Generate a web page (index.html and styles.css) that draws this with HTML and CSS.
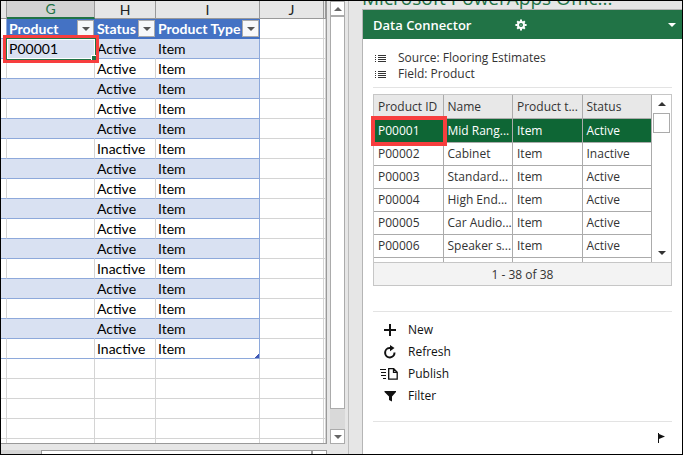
FILE: index.html
```html
<!DOCTYPE html>
<html lang="en">
<head>
<meta charset="utf-8">
<title>Data Connector</title>
<link rel="stylesheet" href="styles.css">
</head>
<body>
<div class="app">
  <main class="workbook">
    <div class="sheet">
      <table class="grid">
        <colgroup><col class="c-edge"><col class="c-g"><col class="c-h"><col class="c-i"><col class="c-j"><col></colgroup>
        <thead>
          <tr class="letters"><th></th><th class="active">G</th><th>H</th><th>I</th><th>J</th><th></th></tr>
        </thead>
        <tbody id="rows">
          <tr class="fields">
            <th></th>
            <th><div class="field">Product<button type="button" class="drop" aria-label="Filter Product"></button></div></th>
            <th><div class="field">Status<button type="button" class="drop" aria-label="Filter Status"></button></div></th>
            <th><div class="field">Product Type<button type="button" class="drop" aria-label="Filter Product Type"></button></div></th>
            <td></td><td></td>
          </tr>
        </tbody>
      </table>
    </div>
    <div class="vscroll">
      <button type="button" class="arrow up" aria-label="Scroll up"></button>
      <div class="thumb"></div>
      <div class="track"></div>
      <button type="button" class="arrow down" aria-label="Scroll down"></button>
    </div>
    <div class="hscroll"><div class="tabs"></div><div class="hthumb"></div><div class="hend"></div></div>
  </main>
  <aside class="pane">
    <div class="pane-title">Microsoft PowerApps Offic...</div>
    <section class="connector">
      <header class="bar">
        <h1>Data Connector</h1>
        <button type="button" class="gear" aria-label="Settings">
          <svg width="12" height="12" viewBox="0 0 12 12"><g fill="#fff"><circle cx="6" cy="6" r="4"/><path d="M5 .4h2v2H5zM5 9.600h2v2H5zM.4 5h2v2h-2zM9.600 5h2v2h-2z"/><path transform="rotate(45 6 6)" d="M5 .6h2v2H5zM5 9.400h2v2H5zM.6 5h2v2h-2zM9.400 5h2v2h-2z"/></g><circle cx="6" cy="6" r="2" fill="#217346"/><circle cx="6" cy="6" r=".6" fill="#fff"/></svg>
        </button>
        <button type="button" class="more" aria-label="Pane options"><svg width="8" height="4" viewBox="0 0 8 4"><path d="M0 0h8L4 4z" fill="#fff"/></svg></button>
      </header>
      <div class="content">
        <ul class="info">
          <li><svg width="11" height="9" viewBox="0 0 11 9"><path d="M0 1.500h1M3 1.500h8M0 3.500h1M3 3.500h8M0 5.500h1M3 5.500h8M0 7.500h1M3 7.500h8" stroke="#333"/></svg>Source: Flooring Estimates</li>
          <li><svg width="11" height="9" viewBox="0 0 11 9"><path d="M0 1.500h1M3 1.500h8M0 3.500h1M3 3.500h8M0 5.500h1M3 5.500h8M0 7.500h1M3 7.500h8" stroke="#333"/></svg>Field: Product</li>
        </ul>
        <div class="list">
          <div class="list-body">
            <div class="clip">
              <table class="records">
                <thead><tr><th>Product ID</th><th>Name</th><th>Product t...</th><th>Status</th></tr></thead>
                <tbody>
                  <tr class="selected"><td><span class="mark"></span>P00001</td><td>Mid Rang...</td><td>Item</td><td>Active</td></tr>
                  <tr><td>P00002</td><td>Cabinet</td><td>Item</td><td>Inactive</td></tr>
                  <tr><td>P00003</td><td>Standard...</td><td>Item</td><td>Active</td></tr>
                  <tr><td>P00004</td><td>High End...</td><td>Item</td><td>Active</td></tr>
                  <tr><td>P00005</td><td>Car Audio...</td><td>Item</td><td>Active</td></tr>
                  <tr><td>P00006</td><td>Speaker s...</td><td>Item</td><td>Active</td></tr>
                  <tr><td></td><td></td><td></td><td></td></tr>
                </tbody>
              </table>
            </div>
            <div class="list-scroll">
              <button type="button" aria-label="Scroll list up"><svg width="8" height="4" viewBox="0 0 8 4"><path d="M0 4h8L4 0z" fill="#333"/></svg></button>
              <div class="list-thumb"></div>
              <button type="button" class="last" aria-label="Scroll list down"><svg width="8" height="4" viewBox="0 0 8 4"><path d="M0 0h8L4 4z" fill="#333"/></svg></button>
            </div>
          </div>
          <div class="count">1 - 38 of 38</div>
        </div>
        <div class="actions">
          <button type="button"><svg width="18" height="14" viewBox="0 0 18 14"><path d="M10 1v12M4 7h12" stroke="#111" stroke-width="2"/></svg>New</button>
          <button type="button"><svg width="18" height="14" viewBox="0 0 18 14"><path d="M12 3H9.500A4.700 4.700 0 1 0 14.500 7.500" fill="none" stroke="#111" stroke-width="2"/><path d="M10 0L14.500 3 10 6.200z" fill="#111"/></svg>Refresh</button>
          <button type="button"><svg width="18" height="14" viewBox="0 0 18 14"><path d="M8.700 1.700h5l3.500 3.500v7H8.700zM13.500 1.700v3.700h3.700" fill="none" stroke="#111" stroke-width="1.300"/><path d="M0 2.500h6M1 5.500h5M1 8.500h5M3 11.500h3" stroke="#111" stroke-width="1.200"/></svg>Publish</button>
          <button type="button"><svg width="18" height="14" viewBox="0 0 18 14"><path d="M4.500 2h11.500v1L12 7.500v5l-3 -1.500V7.500L4.500 3z" fill="#111"/></svg>Filter</button>
        </div>
        <footer class="foot"><button type="button" aria-label="Flag"><svg width="8" height="11" viewBox="0 0 8 11"><path d="M.5 0v10" stroke="#111"/><path d="M1 1l6 2.500L1 6z" fill="#111"/></svg></button></footer>
      </div>
    </section>
  </aside>
</div>
<script src="app.js"></script>
</body>
</html>
```
FILE: styles.css
```css
* { box-sizing: border-box; }
body { margin: 0; font: 12px/16px "Open Sans", "Noto Sans", sans-serif; color: #333; }
button { font: inherit; color: inherit; padding: 0; border: 0; background: none; }
svg { display: block; flex: none; }
.app { display: flex; height: 100vh; border: 1px solid #000; background: #e6e6e6; overflow: hidden; }

/* Workbook */
.workbook { flex: none; display: grid; grid-template: minmax(0, 1fr) 10px / 326px 21px; column-gap: 0; border-right: 1px solid #bdbdbd; }
.sheet { overflow: hidden; border: solid #999; border-width: 0 1px 1px 0; background: #fff; }
.grid { width: 100%; table-layout: fixed; border-collapse: separate; border-spacing: 0; font: 14px/19px Lato, sans-serif; color: #000; }
.c-edge { width: 6px; }
.c-g { width: 88px; }
.c-h { width: 61px; }
.c-i { width: 104px; }
.c-j { width: 64px; }
.grid th, .grid td { height: 20px; padding: 0 0 0 2px; border: solid #d4d4d4; border-width: 0 1px 1px 0; text-align: left; white-space: nowrap; }
.grid .letters th { height: 18px; padding: 0; line-height: 16px; font-weight: 400; text-align: center; background: #e6e6e6; border-right-color: #999; border-bottom-color: #999; color: #222; }
.grid .letters .active { background: #d2d2d2; color: #217346; border-bottom: 2px solid #217346; }
.grid .fields th { background: #4472c4; border-color: #4472c4; color: #fff; }
.grid .fields th:first-child { background: #fff; border-color: #8ea9db; }
.field { display: flex; justify-content: space-between; align-items: center; height: 19px; }
.drop { width: 17px; height: 17px; border: 1px solid #ababab; background: #f7f8fa; display: grid; place-items: center; flex: none; }
.drop::before { content: ""; border: solid transparent; border-width: 4px 4px 0; border-top-color: #555; }
.grid .data td:nth-child(-n+4) { border-bottom-color: #8ea9db; }
.grid .data td:nth-child(4) { border-right-color: #8ea9db; }
.grid .band td:nth-child(-n+4) { background: #d9e1f2; }
.grid .band td:nth-child(-n+3) { border-right-color: #d9e1f2; }
.grid td { position: relative; }
.cursor { position: absolute; inset: -1px -2px -2px -1px; border: 1px solid #217346; box-shadow: inset 0 0 0 1px #fff, 0 0 0 3px #f73e3e; z-index: 1; }
.cursor::after { content: ""; position: absolute; right: -1px; bottom: -1px; width: 4px; height: 4px; background: #217346; border: solid #fff; border-width: 1px 0 0 1px; }
.corner { position: absolute; right: 0; bottom: 0; width: 4px; height: 4px; background: linear-gradient(135deg, transparent 45%, #3f57b5 45%); }

.vscroll { display: flex; flex-direction: column; width: 15px; margin-left: 3px; }
.arrow { height: 15px; border: 1px solid #ababab; background: #fff; display: grid; place-items: center; }
.arrow::before { content: ""; border: 4px solid transparent; border-top: 0; border-bottom-color: #666; }
.down::before { border: 4px solid transparent; border-bottom: 0; border-top-color: #666; }
.thumb { flex: 1; border: 1px solid #ababab; background: #fff; }
.track { height: 20px; background: #d9d9d9; }
.hscroll { grid-column: 1; display: flex; margin-top: 6px; }
.tabs { width: 40px; background: #d5d5d5; }
.hthumb { flex: 1; border: solid #999; border-width: 1px 2px 0 1px; background: #fff; }
.hend { width: 14px; border: solid #999; border-width: 1px 1px 0 0; background: #fff; }

/* Task pane */
.pane { flex: 1; min-width: 0; display: flex; flex-direction: column; padding-left: 13px; }
.pane-title { flex: none; height: 8px; font-size: 19px; line-height: 22px; color: #217346; display: flex; align-items: flex-end; overflow: hidden; white-space: nowrap; }
.connector { flex: 1; min-height: 0; display: flex; flex-direction: column; background: #fff; border: solid #b5b5b5; border-width: 1px 0 0 1px; }
.bar { flex: none; display: flex; align-items: center; height: 29px; padding: 0 6px 0 10px; background: #217346; color: #fff; }
.bar h1 { margin: 0; font-size: 13px; font-weight: 600; flex: 0 0 142px; }
.more { margin-left: auto; }
.content { flex: 1; display: flex; flex-direction: column; padding: 0 10px; }
.info { list-style: none; margin: 0; padding: 11px 2px 5px; border-bottom: 1px solid #e3e3e3; }
.info li { display: flex; align-items: center; gap: 12px; }
.list { margin-top: 6px; border: 1px solid #c6c6c6; }
.list-body { display: flex; height: 168px; border-bottom: 1px solid #c6c6c6; }
.clip { flex: 1; overflow: hidden; margin-left: -3px; padding-left: 3px; }
.records { width: 100%; table-layout: fixed; border-collapse: separate; border-spacing: 0; }
.records th, .records td { height: 23px; padding: 0 0 0 4px; text-align: left; font-weight: 400; white-space: nowrap; border: solid #ababab; border-width: 0 1px 1px 0; }
.records th { height: 24px; background: #e8e8e8; }
.records td { position: relative; }
.records .selected td { height: 24px; background: #0e6635; color: #fff; }
.mark { position: absolute; inset: -3px -4px -4px -3px; border: 4px solid #f73e3e; z-index: 1; }
.list-scroll { flex: none; width: 19px; padding: 7px 1px; display: flex; flex-direction: column; align-items: center; }
.list-thumb { width: 17px; height: 20px; margin-top: 7px; border: 1px solid #ababab; background: #fff; }
.last { margin-top: auto; }
.count { height: 22px; line-height: 23px; text-align: center; background: #f3f3f3; }
.actions { margin-top: 25px; padding: 7px 7px 14px; border-top: 1px solid #e3e3e3; border-bottom: 1px solid #e3e3e3; display: flex; flex-direction: column; align-items: flex-start; }
.actions button { display: flex; align-items: center; gap: 10px; height: 22px; color: #111; }
.foot { display: flex; justify-content: flex-end; padding: 11px 6px 0; }
```
FILE: app.js
```js
const statuses = ["Active", "Active", "Active", "Active", "Active", "Inactive", "Active", "Active",
  "Active", "Active", "Active", "Inactive", "Active", "Active", "Active", "Inactive"];
const body = document.getElementById("rows");
let html = "";
statuses.forEach((status, i) => {
  const product = i === 0 ? '<span class="cursor"></span>P00001' : "";
  const corner = i === statuses.length - 1 ? '<span class="corner"></span>' : "";
  html += `<tr class="data ${i % 2 ? "" : "band"}"><td></td><td>${product}</td><td>${status}</td><td>Item${corner}</td><td></td><td></td></tr>`;
});
for (let i = 0; i < 5; i++) html += "<tr><td></td><td></td><td></td><td></td><td></td><td></td></tr>";
body.insertAdjacentHTML("beforeend", html);
```
